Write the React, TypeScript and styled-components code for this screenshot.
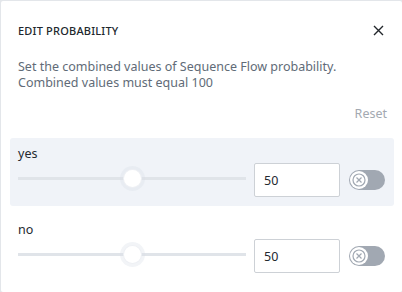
import * as React from 'react'
import styled, { createGlobalStyle } from 'styled-components'

const GlobalStyle = createGlobalStyle`
  html, body {
    margin: 0;
    padding: 0;
    background: #e3e6ea;
  }
  body {
    font-family: "Noto Sans", "Open Sans", sans-serif;
  }
`

const Card = styled.div`
  box-sizing: border-box;
  width: 401px;
  height: 291px;
  margin: 1px 0 0 1px;
  background: #fff;
  border-radius: 2px;
  padding: 19px 8px 0 9px;
`

const Header = styled.div`
  display: flex;
  align-items: center;
  justify-content: space-between;
  padding: 0 8px 0 8px;
  height: 20px;
`

const Title = styled.h2`
  margin: 0;
  font-size: 11px;
  font-weight: 500;
  letter-spacing: 0.2px;
  color: #21272d;
`

const Close = styled.button`
  display: flex;
  align-items: center;
  justify-content: center;
  width: 16px;
  height: 16px;
  padding: 0;
  border: none;
  background: none;
  color: #22262b;
`

const Description = styled.p`
  margin: 19px 0 0;
  padding: 0 8px;
  font-size: 12.5px;
  line-height: 16px;
  color: #616b77;
`

const ResetRow = styled.div`
  display: flex;
  justify-content: flex-end;
  padding: 0 7px;
  margin-top: 14px;
`

const Reset = styled.button`
  padding: 0;
  border: none;
  background: none;
  font: inherit;
  font-size: 12.5px;
  color: #a3a9b1;
`

const List = styled.div`
  display: flex;
  flex-direction: column;
  gap: 8px;
  margin-top: 16px;
`

const Item = styled.div<{ $active?: boolean }>`
  box-sizing: border-box;
  height: 68px;
  padding: 8px 9px 0 8px;
  border-radius: 3px;
  background: ${p => (p.$active ? '#f0f3f8' : 'transparent')};
`

const Label = styled.div`
  font-size: 12.5px;
  line-height: 16px;
  color: #24292f;
`

const Controls = styled.div`
  display: flex;
  align-items: center;
  margin-top: 1px;
`

const Slider = styled.div`
  position: relative;
  flex: 0 0 228px;
  height: 30px;
  margin-bottom: 3px;
  display: flex;
  align-items: center;
`

const Track = styled.div`
  width: 100%;
  height: 3px;
  background: #e0e4e9;
`

const Thumb = styled.div`
  position: absolute;
  top: 50%;
  width: 17px;
  height: 17px;
  margin: -8.5px 0 0 -8.5px;
  border-radius: 50%;
  background: #fff;
  box-shadow: 0 0 0 1px #eef0f4, 0 0 0 4px rgba(218, 223, 232, 0.35);
`

const ValueInput = styled.input`
  box-sizing: border-box;
  width: 86px;
  height: 34px;
  margin-left: 8px;
  padding: 0 9px;
  border: 1px solid #cdd1d6;
  border-radius: 2px;
  background: #fff;
  font: inherit;
  font-size: 12.5px;
  color: #24292f;
  outline: none;
`

const Toggle = styled.div`
  display: flex;
  align-items: center;
  box-sizing: border-box;
  width: 36px;
  height: 20px;
  margin-left: 9px;
  padding: 1px;
  border-radius: 10px;
  background: #a1a8b2;
`

const Knob = styled.div`
  display: flex;
  align-items: center;
  justify-content: center;
  width: 18px;
  height: 18px;
  border-radius: 50%;
  background: #fff;
  color: #a1a8b2;
`

interface Flow {
  name: string
  value: number
}

const flows: Flow[] = [
  { name: 'yes', value: 50 },
  { name: 'no', value: 50 },
]

const App = () => (
  <>
    <GlobalStyle />
    <Card>
      <Header>
        <Title>EDIT PROBABILITY</Title>
        <Close aria-label="Close">
          <svg width="11" height="11" viewBox="0 0 11 11">
            <path d="M1 1L10 10M10 1L1 10" stroke="currentColor" strokeWidth="1.4" />
          </svg>
        </Close>
      </Header>
      <Description>
        Set the combined values of Sequence Flow probability.
        <br />
        Combined values must equal 100
      </Description>
      <ResetRow>
        <Reset>Reset</Reset>
      </ResetRow>
      <List>
        {flows.map((flow, i) => (
          <Item key={flow.name} $active={i === 0}>
            <Label>{flow.name}</Label>
            <Controls>
              <Slider>
                <Track />
                <Thumb style={{ left: `${flow.value}%` }} />
              </Slider>
              <ValueInput readOnly value={flow.value} />
              <Toggle>
                <Knob>
                  <svg width="14" height="14" viewBox="0 0 14 14">
                    <circle cx="7" cy="7" r="6" fill="none" stroke="currentColor" strokeWidth="1.2" />
                    <path d="M4.5 4.5L9.5 9.5M9.5 4.5L4.5 9.5" stroke="currentColor" strokeWidth="1.2" />
                  </svg>
                </Knob>
              </Toggle>
            </Controls>
          </Item>
        ))}
      </List>
    </Card>
  </>
)

export default App
